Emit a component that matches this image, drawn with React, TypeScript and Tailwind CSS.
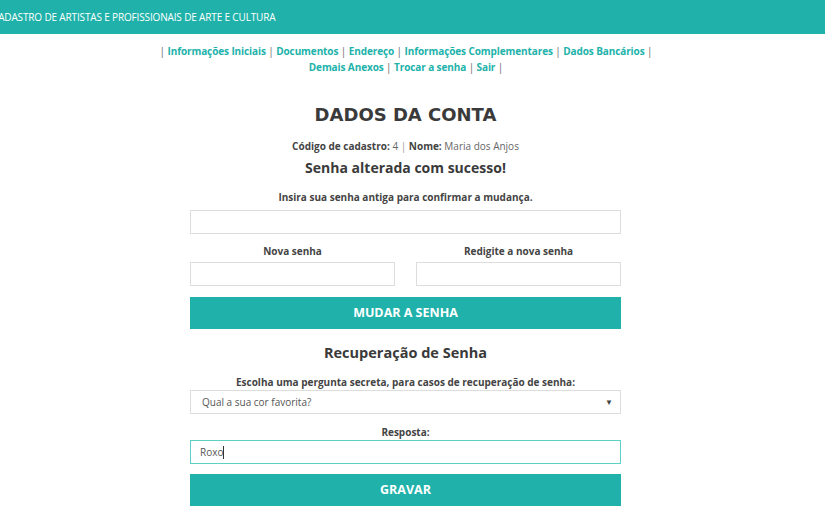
import React from "react";

const teal = "text-[#20b2aa]";

export default function App() {
  const links1 = ["Informações Iniciais", "Documentos", "Endereço", "Informações Complementares", "Dados Bancários"];
  const links2 = ["Demais Anexos", "Trocar a senha", "Sair"];
  return (
    <div className="w-[825px] h-[510px] overflow-hidden bg-white text-[#444]" style={{ fontFamily: '"Open Sans", sans-serif' }}>
      <div className="h-[34px] bg-[#20b2aa] flex items-center overflow-hidden">
        <span className="ml-[-8px] text-white text-[10px] tracking-[-0.15px] whitespace-nowrap">CADASTRO DE ARTISTAS E PROFISSIONAIS DE ARTE E CULTURA</span>
      </div>
      <div className="w-[812px] pt-[9px] text-center text-[10px] tracking-[-0.1px] font-bold leading-[16px]">
        <div>
          <span className="text-[#666] font-normal">| </span>
          {links1.map((l) => (
            <span key={l}>
              <span className={teal}>{l}</span>
              <span className="text-[#666] font-normal"> | </span>
            </span>
          ))}
        </div>
        <div>
          {links2.map((l) => (
            <span key={l}>
              <span className={teal}>{l}</span>
              <span className="text-[#666] font-normal"> | </span>
            </span>
          ))}
        </div>
      </div>
      <div className="ml-[190px] w-[431px] flex flex-col items-stretch">
        <h1 className="mt-[26px] text-center text-[18px] leading-[28px] font-bold text-[#3a3a3a]" style={{ fontFamily: '"DejaVu Sans", sans-serif' }}>
          DADOS DA CONTA
        </h1>
        <div className="mt-[9px] text-center text-[10px] leading-[16px]">
          <b>Código de cadastro:</b> <span className="text-[#666]">4</span> <span className="text-[#999]">|</span> <b>Nome:</b> <span className="text-[#666]">Maria dos Anjos</span>
        </div>
        <div className="mt-[3px] text-center text-[14px] leading-[22px] font-bold text-[#3a3a3a]">Senha alterada com sucesso!</div>
        <label className="mt-[10px] text-center text-[10px] font-bold leading-[16px]">Insira sua senha antiga para confirmar a mudança.</label>
        <input type="password" className="mt-[5px] h-[24px] border border-[#ddd] outline-none" />
        <div className="mt-[9px] flex gap-[21px]">
          <div className="flex-1 flex flex-col">
            <label className="text-center text-[10px] font-bold leading-[16px]">Nova senha</label>
            <input type="password" className="mt-[3px] h-[24px] border border-[#ddd] outline-none" />
          </div>
          <div className="flex-1 flex flex-col">
            <label className="text-center text-[10px] font-bold leading-[16px]">Redigite a nova senha</label>
            <input type="password" className="mt-[3px] h-[24px] border border-[#ddd] outline-none" />
          </div>
        </div>
        <button className="mt-[11px] h-[32px] bg-[#20b2aa] text-white text-[12.5px] font-bold">MUDAR A SENHA</button>
        <div className="mt-[13px] text-center text-[14.5px] leading-[22px] font-bold text-[#3a3a3a]">Recuperação de Senha</div>
        <label className="mt-[10px] text-center text-[10px] font-bold leading-[16px]">Escolha uma pergunta secreta, para casos de recuperação de senha:</label>
        <div className="mt-0 h-[24px] border border-[#ddd] flex items-center justify-between pl-[11px] pr-[7px] text-[10px] text-[#555]">
          <span>Qual a sua cor favorita?</span>
          <span className="text-[8px] text-[#444]">▼</span>
        </div>
        <label className="mt-[10px] text-center text-[10px] font-bold leading-[16px]">Resposta:</label>
        <div className="mt-0 h-[24px] border border-[#5ccfc7] flex items-center pl-[9px] text-[10px] text-[#555]">
          Roxo<span className="inline-block w-px h-[13px] bg-[#333]"></span>
        </div>
        <button className="mt-[10px] h-[32px] bg-[#20b2aa] text-white text-[12.5px] font-bold">GRAVAR</button>
      </div>
    </div>
  );
}
